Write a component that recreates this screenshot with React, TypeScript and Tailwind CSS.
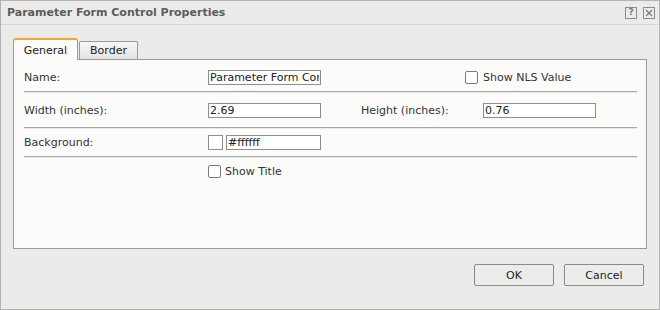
const font = { fontFamily: '"DejaVu Sans", Verdana, sans-serif' };

function Box() {
  return <span className="inline-block w-[13px] h-[13px] rounded-[2px] border border-[#7a7a7a] bg-white" />;
}

function Field({ value, w }: { value: string; w: string }) {
  return (
    <input
      readOnly
      value={value}
      className={`${w} h-[15px] border border-[#8e8e8e] bg-white px-[1px] text-[11px] leading-[13px] text-[#222] outline-none`}
      style={font}
    />
  );
}

function Sep() {
  return <div className="border-t border-b border-t-[#a8a8a8] border-b-[#e9e9e9]" />;
}

export default function App() {
  return (
    <div
      className="w-[660px] h-[310px] bg-[#ebece9] border border-[#b3b3b3] flex flex-col text-[11px] leading-[15px] text-[#333]"
      style={font}
    >
      <div className="h-[24px] shrink-0 border-b border-[#d5d6d3] flex items-center pl-[6px] pr-[4px]">
        <span className="font-bold text-[#5c5c5c] text-[11px]">Parameter Form Control Properties</span>
        <div className="ml-auto flex gap-[6px]">
          <span className="w-[12px] h-[12px] border border-[#8a8a8a] flex items-center justify-center text-[9px] leading-none text-[#7a7a7a] font-bold">?</span>
          <span className="w-[12px] h-[12px] border border-[#8a8a8a] flex items-center justify-center">
            <svg width="8" height="8" viewBox="0 0 8 8">
              <path d="M1 1 L7 7 M7 1 L1 7" stroke="#7a7a7a" strokeWidth="1.2" />
            </svg>
          </span>
        </div>
      </div>

      <div className="flex-1 px-[12px] pt-[12px] flex flex-col">
        <div className="flex items-end gap-[1px] h-[22px]">
          <div className="relative z-10 w-[65px] h-[22px] -mb-px bg-[#fbfcfa] border-x border-[#9a9a9a] border-t-2 border-t-[#f0a43a] rounded-t-[3px] flex items-center justify-center text-[#222]">
            General
          </div>
          <div className="w-[59px] h-[18px] bg-gradient-to-b from-[#f7f8f6] to-[#e4e5e2] border border-[#9a9a9a] border-b-0 rounded-t-[2px] flex items-center justify-center text-[#222]">
            Border
          </div>
        </div>

        <div className="h-[190px] border border-[#9a9a9a] bg-[#fbfcfa] pl-[10px] pr-[9px]">
          <div className="flex items-center pt-[10px] pb-[6px] h-[31px]">
            <span className="w-[184px]">Name:</span>
            <Field value="Parameter Form Control" w="w-[113px]" />
            <span className="ml-[144px] flex items-center gap-[5px]">
              <Box />
              <span>Show NLS Value</span>
            </span>
          </div>
          <Sep />
          <div className="flex items-center pt-[10px] pb-[9px]">
            <span className="w-[184px]">Width (inches):</span>
            <Field value="2.69" w="w-[113px]" />
            <span className="ml-[40px] w-[122px]">Height (inches):</span>
            <Field value="0.76" w="w-[113px]" />
          </div>
          <Sep />
          <div className="flex items-center pt-[6px] pb-[6px]">
            <span className="w-[184px]">Background:</span>
            <span className="w-[15px] h-[15px] border border-[#8e8e8e] bg-white" />
            <span className="ml-[3px] flex">
              <Field value="#ffffff" w="w-[95px]" />
            </span>
          </div>
          <Sep />
          <div className="flex items-center pt-[6px]">
            <span className="w-[184px]" />
            <span className="flex items-center gap-[4px]">
              <Box />
              <span>Show Title</span>
            </span>
          </div>
        </div>

        <div className="flex justify-end gap-[10px] pr-[3px] mt-[15px]">
          <button className="w-[80px] h-[22px] border border-[#8a8a8a] rounded-[2px] bg-[#ecedea] text-[#222] text-[11px]">OK</button>
          <button className="w-[80px] h-[22px] border border-[#8a8a8a] rounded-[2px] bg-[#ecedea] text-[#222] text-[11px]">Cancel</button>
        </div>
      </div>
    </div>
  );
}
